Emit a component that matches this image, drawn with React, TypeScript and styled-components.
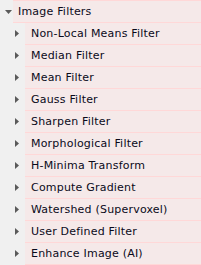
import React from "react";
import styled, { createGlobalStyle } from "styled-components";

const GlobalStyle = createGlobalStyle`
  html, body {
    margin: 0;
    padding: 0;
    background: #f0f0f0;
  }
`;

const filters = [
  "Non-Local Means Filter",
  "Median Filter",
  "Mean Filter",
  "Gauss Filter",
  "Sharpen Filter",
  "Morphological Filter",
  "H-Minima Transform",
  "Compute Gradient",
  "Watershed (Supervoxel)",
  "User Defined Filter",
  "Enhance Image (AI)",
];

const Tree = styled.div`
  width: 201px;
  background: #f0f0f0;
  font-family: "DejaVu Sans", Tahoma, sans-serif;
  font-size: 11px;
  letter-spacing: 0.2px;
  color: #0a0a1a;
`;

const Row = styled.div<{ indent: number; first?: boolean }>`
  display: flex;
  height: ${({ first }) => (first ? "23px" : "22px")};
  padding-left: ${({ indent }) => indent}px;
`;

const Toggle = styled.div<{ open: boolean }>`
  width: 13px;
  margin-left: -13px;
  display: flex;
  align-items: center;
  box-sizing: border-box;
  padding-left: ${({ open }) => (open ? "5px" : "3px")};
  padding-bottom: ${({ open }) => (open ? "0" : "1px")};
`;

const Label = styled.div<{ first?: boolean }>`
  flex: 1;
  display: flex;
  align-items: center;
  padding-left: ${({ first }) => (first ? "5px" : "6px")};
  background: #f5e9e9;
  border-top: ${({ first }) => (first ? "1px solid #ffd8d8" : "none")};
  border-bottom: 1px solid #ffd8d8;
  white-space: nowrap;
  line-height: 1;
`;

const Caret = ({ open }: { open: boolean }) =>
  open ? (
    <svg width="7" height="4" viewBox="0 0 7 4">
      <path d="M0 0h7L3.5 4z" fill="#5a5a5a" />
    </svg>
  ) : (
    <svg width="4" height="7" viewBox="0 0 4 7">
      <path d="M0 0v7l4-3.5z" fill="#5a5a5a" />
    </svg>
  );

const App = () => (
  <>
    <GlobalStyle />
    <Tree>
      <Row indent={13} first>
        <Toggle open>
          <Caret open />
        </Toggle>
        <Label first>Image Filters</Label>
      </Row>
      {filters.map((name) => (
        <Row indent={25} key={name}>
          <Toggle open={false}>
            <Caret open={false} />
          </Toggle>
          <Label>{name}</Label>
        </Row>
      ))}
    </Tree>
  </>
);

export default App;
